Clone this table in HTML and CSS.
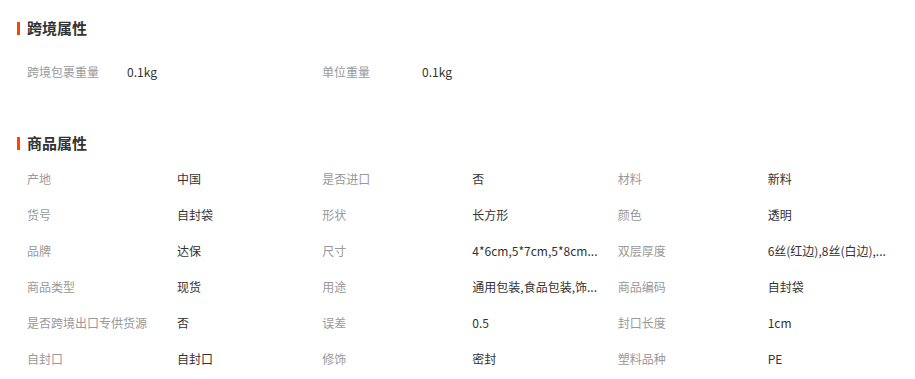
FILE: index.html
```html
<!DOCTYPE html>
<html lang="zh">
<head>
<meta charset="utf-8">
<link rel="stylesheet" href="styles.css">
</head>
<body>
<div class="page">
  <section class="block block-cross">
    <h2 class="title">跨境属性</h2>
    <div class="grid grid-cross">
      <div class="item"><span class="label">跨境包裹重量</span><span class="value">0.1kg</span></div>
      <div class="item"><span class="label">单位重量</span><span class="value">0.1kg</span></div>
    </div>
  </section>
  <section class="block block-goods">
    <h2 class="title">商品属性</h2>
    <div class="grid grid-goods">
      <div class="item"><span class="label">产地</span><span class="value">中国</span></div>
      <div class="item"><span class="label">是否进口</span><span class="value">否</span></div>
      <div class="item"><span class="label">材料</span><span class="value">新料</span></div>
      <div class="item"><span class="label">货号</span><span class="value">自封袋</span></div>
      <div class="item"><span class="label">形状</span><span class="value">长方形</span></div>
      <div class="item"><span class="label">颜色</span><span class="value">透明</span></div>
      <div class="item"><span class="label">品牌</span><span class="value">达保</span></div>
      <div class="item"><span class="label">尺寸</span><span class="value">4*6cm,5*7cm,5*8cm...</span></div>
      <div class="item"><span class="label">双层厚度</span><span class="value">6丝(红边),8丝(白边),...</span></div>
      <div class="item"><span class="label">商品类型</span><span class="value">现货</span></div>
      <div class="item"><span class="label">用途</span><span class="value">通用包装,食品包装,饰...</span></div>
      <div class="item"><span class="label">商品编码</span><span class="value">自封袋</span></div>
      <div class="item"><span class="label">是否跨境出口专供货源</span><span class="value">否</span></div>
      <div class="item"><span class="label">误差</span><span class="value">0.5</span></div>
      <div class="item"><span class="label">封口长度</span><span class="value">1cm</span></div>
      <div class="item"><span class="label">自封口</span><span class="value">自封口</span></div>
      <div class="item"><span class="label">修饰</span><span class="value">密封</span></div>
      <div class="item"><span class="label">塑料品种</span><span class="value">PE</span></div>
    </div>
  </section>
</div>
</body>
</html>
```

FILE: styles.css
```css
html, body {
  margin: 0;
  padding: 0;
  background: #fff;
}
body {
  font-family: "Noto Sans CJK SC", "Microsoft YaHei", sans-serif;
  color: #333;
}
.page {
  padding: 18px 0 0 17px;
}
.title {
  margin: 0;
  height: 20px;
  line-height: 20px;
  font-size: 15px;
  font-weight: bold;
  color: #333;
  display: flex;
  align-items: center;
  gap: 7px;
}
.title::before {
  content: "";
  display: block;
  width: 3px;
  height: 13px;
  background: #ff4400;
}
.block-cross .grid {
  margin-top: 15px;
}
.block-goods {
  margin-top: 44px;
}
.block-goods .grid {
  margin-top: 7px;
}
.grid {
  display: grid;
  grid-template-columns: repeat(3, 295.33px);
  padding-left: 10px;
}
.grid-cross {
  grid-template-columns: 295px 295px;
}
.item {
  display: flex;
  align-items: center;
  height: 36px;
  font-size: 12px;
  white-space: nowrap;
}
.label {
  color: #999;
  width: 150px;
  flex: none;
}
.grid-cross .label {
  width: 100px;
}
.value {
  color: #333;
}
```
